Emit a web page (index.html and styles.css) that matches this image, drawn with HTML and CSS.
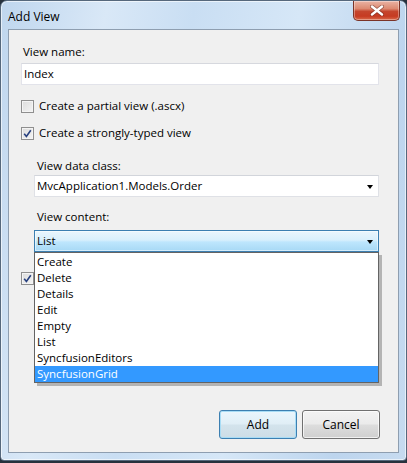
FILE: index.html
```html
<!DOCTYPE html>
<html>
<head>
<meta charset="utf-8">
<link rel="stylesheet" href="styles.css">
</head>
<body>
<div class="window">
  <div class="titlebar">
    <span class="title">Add View</span>
    <div class="close">
      <svg width="14" height="11" viewBox="0 0 14 11">
        <path d="M2 1.5 L12 9.5 M12 1.5 L2 9.5" stroke="#5a2018" stroke-width="4" stroke-linecap="round" fill="none" opacity="0.5"/>
        <path d="M2 1.5 L12 9.5 M12 1.5 L2 9.5" stroke="#ffffff" stroke-width="2.4" stroke-linecap="round" fill="none"/>
      </svg>
    </div>
  </div>
  <div class="client">
    <div class="label first">View name:</div>
    <div class="textbox">Index</div>
    <div class="check row1"><span class="box"></span><span>Create a partial view (.ascx)</span></div>
    <div class="check row2"><span class="box"><svg class="tick" width="9" height="9" viewBox="0 0 9 9"><path d="M1.2 4.8 L3.4 7.4 L7.8 1.2" stroke="#27407f" stroke-width="1.6" fill="none"/></svg></span><span>Create a strongly-typed view</span></div>
    <div class="sub">
      <div class="label l-data">View data class:</div>
      <div class="combo"><span>MvcApplication1.Models.Order</span><span class="arrow"></span></div>
      <div class="label l-content">View content:</div>
      <div class="combo-wrap">
        <div class="combo focused"><span>List</span><span class="arrow"></span></div>
        <ul class="dropdown">
          <li>Create</li>
          <li>Delete</li>
          <li>Details</li>
          <li>Edit</li>
          <li>Empty</li>
          <li>List</li>
          <li>SyncfusionEditors</li>
          <li class="selected">SyncfusionGrid</li>
        </ul>
      </div>
    </div>
    <div class="check row3"><span class="box"><svg class="tick" width="9" height="9" viewBox="0 0 9 9"><path d="M1.2 4.8 L3.4 7.4 L7.8 1.2" stroke="#27407f" stroke-width="1.6" fill="none"/></svg></span></div>
    <div class="buttons">
      <div class="btn default">Add</div>
      <div class="btn">Cancel</div>
    </div>
  </div>
</div>
</body>
</html>
```

FILE: styles.css
```css
* { box-sizing: border-box; }
html, body { margin: 0; padding: 0; }
body {
  background: #27313d;
  width: 407px;
  height: 463px;
  overflow: hidden;
  font-family: "Open Sans", "Noto Sans", sans-serif;
  font-size: 11.5px;
  color: #000;
}
.window {
  width: 407px;
  height: 461px;
  border: 1px solid #56687c;
  border-radius: 7px 7px 4px 4px;
  background: linear-gradient(100deg, #bfd6ee 0%, #d9e8f7 22%, #c9def3 40%, #d6e7f7 62%, #bdd5ee 85%, #c7dbf0 100%);
  display: flex;
  flex-direction: column;
  box-shadow: inset 0 0 0 1px rgba(255,255,255,0.6);
}
.titlebar {
  height: 28px;
  display: flex;
  justify-content: space-between;
  align-items: flex-start;
  flex: none;
}
.title {
  font-size: 12px;
  line-height: 16px;
  margin: 8px 0 0 7px;
  color: #000;
}
.close {
  width: 47px;
  height: 20px;
  margin-right: 6px;
  border: 1px solid #7a3428;
  border-top: none;
  border-radius: 0 0 5px 5px;
  background: linear-gradient(to bottom, #e9b3a4 0%, #dc8a72 40%, #c5452d 55%, #c63b22 80%, #d96a4a 100%);
  display: flex;
  align-items: center;
  justify-content: center;
  box-shadow: inset 0 0 0 1px rgba(255,255,255,0.35);
}
.close svg { display: block; }
.client {
  flex: 1;
  margin: 0 7px 7px 7px;
  border: 1px solid #8e9eb0;
  background: #f0f0f0;
  padding: 0 19px 13px 12px;
  display: flex;
  flex-direction: column;
  position: relative;
}
.label {
  line-height: 16px;
  padding-left: 2px;
  white-space: nowrap;
}
.label.first { margin-top: 14px; }
.textbox {
  margin-top: 3px;
  height: 22px;
  border: 1px solid #e2e3ea;
  border-top-color: #d6d8de;
  background: #fff;
  line-height: 20px;
  padding-left: 2px;
}
.check {
  display: flex;
  align-items: center;
  height: 16px;
  line-height: 16px;
  white-space: nowrap;
}
.check .box {
  width: 13px;
  height: 13px;
  border: 1px solid #8f8f8f;
  background: linear-gradient(135deg, #dcdcdc 0%, #f4f4f4 100%);
  box-shadow: inset 0 0 0 1px #f4f4f4;
  margin-right: 5px;
  flex: none;
  display: flex;
  align-items: center;
  justify-content: center;
}
.check .box .tick { display: block; }
.row1 { margin-top: 13px; }
.row2 { margin-top: 11px; }
.row3 { margin-top: 18px; }
.sub { margin-left: 13px; display: flex; flex-direction: column; }
.sub .label { padding-left: 3px; }
.l-data { margin-top: 17px; }
.l-content { margin-top: 12px; }
.combo {
  margin-top: 1px;
  height: 22px;
  border: 1px solid #dfe1e6;
  border-top-color: #d2d5db;
  background: #fff;
  display: flex;
  align-items: center;
  justify-content: space-between;
  padding: 0 5px 0 2px;
  line-height: 20px;
}
.l-content + .combo-wrap .combo { margin-top: 5px; }
.combo-wrap { position: relative; }
.combo.focused {
  border: 1px solid #3c7fb1;
  background: linear-gradient(to bottom, #eaf6fd 0%, #d9f0fc 45%, #bee6fd 55%, #a7d9f5 100%);
  box-shadow: inset 0 0 0 1px rgba(255,255,255,0.5);
}
.arrow {
  width: 0;
  height: 0;
  border-left: 3.5px solid transparent;
  border-right: 3.5px solid transparent;
  border-top: 4px solid #000;
  margin-top: 1px;
}
.dropdown {
  position: absolute;
  top: 100%;
  left: 0;
  right: 0;
  margin: 0;
  padding: 1px 0 0 0;
  list-style: none;
  background: #fff;
  border: 1px solid #646464;
  box-shadow: 3px 3px 0 rgba(120,120,120,0.5);
  z-index: 5;
}
.dropdown li {
  height: 16px;
  line-height: 16px;
  padding-left: 2px;
  white-space: nowrap;
}
.dropdown li.selected {
  background: #3399ff;
  color: #fff;
}
.buttons {
  margin-top: auto;
  margin-right: -1px;
  display: flex;
  justify-content: flex-end;
  gap: 5px;
}
.btn {
  width: 78px;
  height: 29px;
  border: 1px solid #707070;
  border-radius: 3px;
  background: linear-gradient(to bottom, #f2f2f2 0%, #ebebeb 48%, #dddddd 52%, #cfcfcf 100%);
  box-shadow: inset 0 0 0 1px rgba(255,255,255,0.7);
  display: flex;
  align-items: center;
  justify-content: center;
  font-size: 12px;
}
.btn.default {
  border-color: #3c7fb1;
  background: linear-gradient(to bottom, #eaf6fd 0%, #e0eef6 48%, #d3e3ec 52%, #cddde6 100%);
  box-shadow: inset 0 0 0 1px #a8dcf5;
}
```
